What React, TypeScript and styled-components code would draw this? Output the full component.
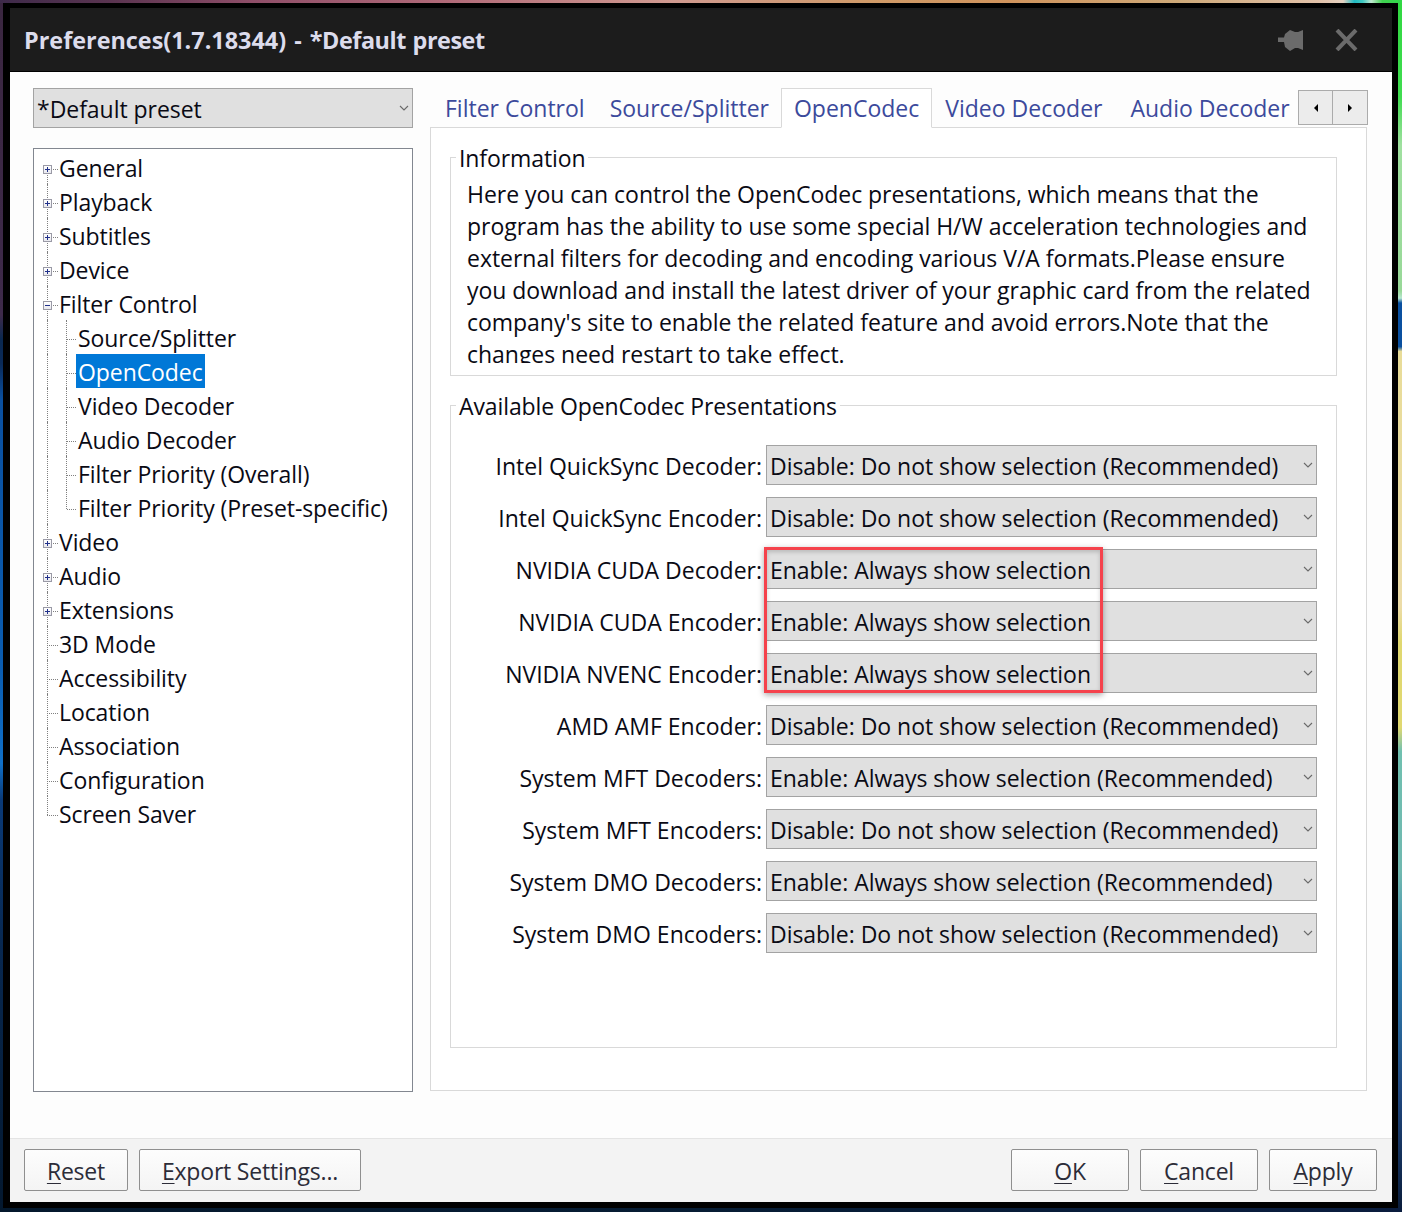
import React from 'react';
import styled, { createGlobalStyle } from 'styled-components';

const Global = createGlobalStyle`
  html, body { margin: 0; padding: 0; }
  body {
    width: 1402px; height: 1212px; overflow: hidden;
    font-family: "Open Sans", "Noto Sans", sans-serif;
    background: #0a1c3a;
  }
`;

const Page = styled.div`
  width: 1402px; height: 1212px; box-sizing: border-box;
  padding: 3px 4px 4px 3px;
  background:
    linear-gradient(90deg, #3e2a4a 0%, #5a3450 8%, #8e4e68 18%, #b06a78 32%, #d09a90 48%, #cf9a68 62%, #d0935c 72%, #cda878 84%, #e0c0a8 94%, #e4d0c0 95.8%, #20b8c0 96.6%, #40c8c0 97.2%, #c0e8d0 97.8%, #40d050 98.6%, #30d848 100%) top/100% 3px no-repeat,
    linear-gradient(90deg, #04182c 0%, #061c34 50%, #0a1c3e 100%) bottom/100% 4px no-repeat,
    linear-gradient(180deg, #3a2640 0, #3e2a4a 26%, #0a2850 28%, #0a2a58 30%, #0a50a0 33%, #0a5cb0 55%, #1070c8 63%, #0a3a78 66%, #082850 78%, #04182e 100%) left/3px 100% no-repeat,
    linear-gradient(180deg, #30d840 0, #40dc50 8%, #a0e0a0 12%, #98d898 24%, #b8e8d0 24.6%, #0a50a0 25%, #0a50a0 28.6%, #e8dc98 29%, #ecdca8 50%, #e0d870 53%, #e0d870 60%, #70c0b0 62%, #70b8b0 72%, #3080b0 80%, #204880 90%, #0a1c3a 100%) right/4px 100% no-repeat;
`;

const Win = styled.div`
  width: 100%; height: 100%; box-sizing: border-box;
  background: #000; padding: 5px 6px 6px 7px;
  display: flex; flex-direction: column;
`;

const TitleBar = styled.div`
  height: 63px; flex: none; background: #1c1c1c;
  border-bottom: 1px solid #000;
  display: flex; align-items: center; justify-content: space-between;
  padding: 0 34px 0 14px; box-sizing: content-box;
`;
const Title = styled.div`
  color: #dcdcec; font-weight: 700; font-size: 23.4px; white-space: pre; word-spacing: 2px;
`;
const TitleTail = styled.span`letter-spacing: -0.45px; word-spacing: 1px;`;
const TitleIcons = styled.div`display: flex; align-items: center; gap: 32px;`;

const Body = styled.div`
  flex: 1; min-height: 0; background: #fdfdfd; display: flex; padding: 16px 25px 0 23px; gap: 17px;
  box-sizing: border-box;
`;
const Left = styled.div`width: 380px; flex: none; display: flex; flex-direction: column; gap: 20px; height: 1004px;`;
const Right = styled.div`flex: 1; display: flex; flex-direction: column; height: 1003px; min-width: 0;`;

const Combo = styled.div`
  height: 40px; box-sizing: border-box; background: #e0e0e0; border: 1px solid #a3a3a3;
  display: flex; align-items: center; justify-content: space-between;
  padding: 1px 2px 0 3px; font-size: 23px; letter-spacing: -0.04px; color: #0a0a14; white-space: nowrap; flex: none;
`;
const Chevron = () => (
  <svg width="12" height="7" viewBox="0 0 12 7" fill="none" stroke="#6a6a6a" strokeWidth="1.1"><path d="M2 1l4 4 4-4" /></svg>
);

const Tree = styled.div`
  flex: 1; background: #fff; border: 1px solid #828790; box-sizing: border-box; padding-top: 1px;
  display: flex; flex-direction: column;
`;
const Row = styled.div<{ $level: number; $last?: boolean; $first?: boolean }>`
  height: 34px; flex: none; position: relative; display: flex; align-items: center;
  padding-left: ${p => (p.$level ? 44 : 25)}px;
  font-size: 23px; letter-spacing: -0.08px; color: #0a0a14; white-space: nowrap;
  &::before {
    content: ''; position: absolute; left: 13px; top: ${p => (p.$first ? '19px' : 0)};
    height: ${p => (p.$first ? '15px' : p.$last ? '19px' : '34px')}; border-left: 1px dotted #808080;
  }
  &::after {
    content: ''; position: absolute; top: 19px;
    left: ${p => (p.$level ? 33 : 13)}px; width: ${p => (p.$level ? 9 : 11)}px;
    border-top: 1px dotted #808080;
  }
`;
const ChildLine = styled.i<{ $last?: boolean }>`
  position: absolute; left: 32px; top: 0; height: ${p => (p.$last ? '19px' : '34px')}; border-left: 1px dotted #808080;
`;
const Expander = styled.span`
  position: absolute; left: 9px; top: 15px; width: 9px; height: 9px; box-sizing: border-box; z-index: 1;
  background: linear-gradient(#fff, #e8e8ee); border: 1px solid #9a9aa6;
  display: flex; align-items: center; justify-content: center;
  svg { display: block; }
`;
const Label = styled.span<{ $sel?: boolean }>`
  position: relative; z-index: 1; height: 34px; line-height: 36px; padding: 0 2px;
  background: ${p => (p.$sel ? '#0078d7' : 'transparent')};
  color: ${p => (p.$sel ? '#fff' : 'inherit')};
  margin-left: -2px;
`;

const Tabs = styled.div`height: 39px; flex: none; display: flex; align-items: flex-start; position: relative; padding-left: 2px;`;
const Tab = styled.div<{ $active?: boolean; $right: number }>`
  height: 40px; box-sizing: border-box; display: flex; align-items: center;
  padding: 0 ${p => p.$right}px 0 12px; font-size: 23px; color: #3c4a9c; white-space: nowrap;
  border: 1px solid ${p => (p.$active ? '#d9d9d9' : 'transparent')};
  ${p => (p.$active ? 'border-bottom: 1px solid #fff; background: #fff; position: relative; z-index: 2;' : '')}
`;
const TabScroll = styled.div`
  position: absolute; right: -1px; top: 2px; display: flex; z-index: 3;
`;
const TabBtn = styled.div`
  width: 35px; height: 35px; box-sizing: border-box; background: #ececec; border: 1px solid #ababab;
  display: flex; align-items: center; justify-content: center;
  & + & { margin-left: -1px; width: 36px; }
`;
const Panel = styled.div`
  flex: 1; background: #fff; border: 1px solid #d9d9d9; box-sizing: border-box;
  padding: 13px 29px 0 19px; display: flex; flex-direction: column;
`;
const Group = styled.fieldset<{ $h: number }>`
  margin: 0; padding: 0; border: 1px solid #d9d9d9; height: ${p => p.$h}px; box-sizing: border-box;
  min-width: 0; flex: none;
`;
const Legend = styled.legend`
  margin-left: 5px; padding: 0 3px; font-size: 23px; letter-spacing: -0.1px; color: #0a0a14; line-height: 32px; white-space: nowrap;
  position: relative; top: 1px;
`;
const Info = styled.div`
  margin: 5px 0 0 16px; height: 185px; overflow: hidden; font-size: 23px; letter-spacing: -0.03px; line-height: 32px; color: #0a0a14; white-space: nowrap;
`;
const Gap = styled.div`height: 13px; flex: none;`;
const Rows = styled.div`
  position: relative; display: flex; flex-direction: column; gap: 12px; padding: 24px 19px 0 0;
`;
const SelRow = styled.div`display: flex; align-items: center; justify-content: flex-end; gap: 4px; height: 40px;`;
const RowLabel = styled.div`font-size: 23px; color: #0a0a14; white-space: nowrap; padding-top: 1px;`;
const RowCombo = styled(Combo)`width: 551px;`;
const Highlight = styled.div`
  position: absolute; left: 313px; top: 126px; width: 339px; height: 146px; box-sizing: border-box;
  border: 3px solid #f5424c; box-shadow: 0 2px 6px rgba(0,0,0,.35), inset 0 2px 4px rgba(0,0,0,.18);
  pointer-events: none;
`;

const Footer = styled.div`
  height: 64px; flex: none; background: #f3f3f3; border-top: 1px solid #e4e4e4; box-sizing: border-box;
  display: flex; align-items: flex-start; justify-content: space-between; padding: 10px 15px 0 14px;
`;
const BtnGroup = styled.div`display: flex; gap: 11px;`;
const Btn = styled.div<{ $w: number }>`
  width: ${p => p.$w}px; height: 42px; box-sizing: border-box; border: 1px solid #8f8f8f; border-radius: 2px;
  background: linear-gradient(#fdfdfd, #f4f4f4); font-size: 23px; letter-spacing: -0.2px; color: #2c2c38; padding-top: 2px;
  display: flex; align-items: center; justify-content: center; white-space: nowrap;
  u { text-underline-offset: 3px; text-decoration-thickness: 1px; }
`;

const TreeData: [string, number, ('plus' | 'minus' | null)?][] = [
  ['General', 0, 'plus'], ['Playback', 0, 'plus'], ['Subtitles', 0, 'plus'], ['Device', 0, 'plus'], ['Filter Control', 0, 'minus'],
  ['Source/Splitter', 1], ['OpenCodec', 1], ['Video Decoder', 1], ['Audio Decoder', 1], ['Filter Priority (Overall)', 1], ['Filter Priority (Preset-specific)', 1],
  ['Video', 0, 'plus'], ['Audio', 0, 'plus'], ['Extensions', 0, 'plus'], ['3D Mode', 0], ['Accessibility', 0], ['Location', 0], ['Association', 0], ['Configuration', 0], ['Screen Saver', 0],
];

const DIS = 'Disable: Do not show selection (Recommended)';
const EN = 'Enable: Always show selection';
const ENR = 'Enable: Always show selection (Recommended)';
const SelRows: [string, string][] = [
  ['Intel QuickSync Decoder:', DIS], ['Intel QuickSync Encoder:', DIS],
  ['NVIDIA CUDA Decoder:', EN], ['NVIDIA CUDA Encoder:', EN], ['NVIDIA NVENC Encoder:', EN],
  ['AMD AMF Encoder:', DIS], ['System MFT Decoders:', ENR], ['System MFT Encoders:', DIS],
  ['System DMO Decoders:', ENR], ['System DMO Encoders:', DIS],
];

const Pin = () => (
  <svg width="25" height="22" viewBox="0 0 25 22" fill="#6b6b6b"><path d="M0 8.5H6L7 5l5-4 5 2h3l5-2v20l-5-2h-3l-5 3-5-4-1-5H0z" /></svg>
);
const Close = () => (
  <svg width="23" height="22" viewBox="0 0 23 22" fill="none" stroke="#6b6b6b" strokeWidth="4"><path d="M2 1l19 20M21 1L2 21" /></svg>
);

export default function App() {
  return (
    <>
      <Global />
      <Page>
        <Win>
          <TitleBar>
            <Title>Preferences(1.7.18344) - <TitleTail>*Default preset</TitleTail></Title>
            <TitleIcons><Pin /><Close /></TitleIcons>
          </TitleBar>
          <Body>
            <Left>
              <Combo>*Default preset<Chevron /></Combo>
              <Tree>
                {TreeData.map(([t, lvl, exp], i) => (
                  <Row key={t} $level={lvl} $first={i === 0} $last={i === TreeData.length - 1}>
                    {lvl === 1 && <ChildLine $last={i === 10} />}
                    {exp && (
                      <Expander>
                        <svg width="7" height="7" viewBox="0 0 7 7" stroke="#20308a" strokeWidth="1">
                          <path d="M1 3.5h5" />{exp === 'plus' && <path d="M3.5 1v5" />}
                        </svg>
                      </Expander>
                    )}
                    <Label $sel={t === 'OpenCodec'}>{t}</Label>
                  </Row>
                ))}
              </Tree>
            </Left>
            <Right>
              <Tabs>
                <Tab $right={11}>Filter Control</Tab>
                <Tab $right={11}>Source/Splitter</Tab>
                <Tab $active $right={12}>OpenCodec</Tab>
                <Tab $right={14}>Video Decoder</Tab>
                <Tab $right={12}>Audio Decoder</Tab>
                <TabScroll>
                  <TabBtn><svg width="6" height="8" viewBox="0 0 6 8"><path d="M5 0v8L1 4z" /></svg></TabBtn>
                  <TabBtn><svg width="6" height="8" viewBox="0 0 6 8"><path d="M1 0v8l4-4z" /></svg></TabBtn>
                </TabScroll>
              </Tabs>
              <Panel>
                <Group $h={235}>
                  <Legend>Information</Legend>
                  <Info>
                    Here you can control the OpenCodec presentations, which means that the<br />
                    program has the ability to use some special H/W acceleration technologies and<br />
                    external filters for decoding and encoding various V/A formats.Please ensure<br />
                    you download and install the latest driver of your graphic card from the related<br />
                    company's site to enable the related feature and avoid errors.Note that the<br />
                    changes need restart to take effect.
                  </Info>
                </Group>
                <Gap />
                <Group $h={659}>
                  <Legend>Available OpenCodec Presentations</Legend>
                  <Rows>
                    {SelRows.map(([l, v]) => (
                      <SelRow key={l}>
                        <RowLabel>{l}</RowLabel>
                        <RowCombo>{v}<Chevron /></RowCombo>
                      </SelRow>
                    ))}
                    <Highlight />
                  </Rows>
                </Group>
              </Panel>
            </Right>
          </Body>
          <Footer>
            <BtnGroup>
              <Btn $w={104}><span><u>R</u>eset</span></Btn>
              <Btn $w={222}><span><u>E</u>xport Settings...</span></Btn>
            </BtnGroup>
            <BtnGroup>
              <Btn $w={118}><span><u>O</u>K</span></Btn>
              <Btn $w={118}><span><u>C</u>ancel</span></Btn>
              <Btn $w={108}><span><u>A</u>pply</span></Btn>
            </BtnGroup>
          </Footer>
        </Win>
      </Page>
    </>
  );
}
